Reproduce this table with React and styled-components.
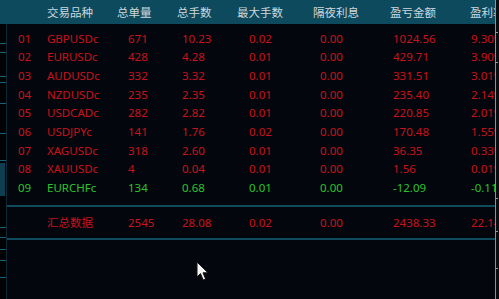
import styled, { createGlobalStyle } from 'styled-components';

const GlobalStyle = createGlobalStyle`
  html, body {
    margin: 0;
    padding: 0;
    background: #03070d;
  }
  body {
    font-family: "Noto Sans", "Noto Sans CJK SC", sans-serif;
    font-size: 11.5px;
  }
`;

const RED = '#c8121d';
const GREEN = '#2cc22c';

const rows = [
    { no: '01', sym: 'GBPUSDc', qty: '671', lots: '10.23', max: '0.02', swap: '0.00', pnl: '1024.56', rate: '9.30%', up: false },
    { no: '02', sym: 'EURUSDc', qty: '428', lots: '4.28', max: '0.01', swap: '0.00', pnl: '429.71', rate: '3.90%', up: false },
    { no: '03', sym: 'AUDUSDc', qty: '332', lots: '3.32', max: '0.01', swap: '0.00', pnl: '331.51', rate: '3.01%', up: false },
    { no: '04', sym: 'NZDUSDc', qty: '235', lots: '2.35', max: '0.01', swap: '0.00', pnl: '235.40', rate: '2.14%', up: false },
    { no: '05', sym: 'USDCADc', qty: '282', lots: '2.82', max: '0.01', swap: '0.00', pnl: '220.85', rate: '2.01%', up: false },
    { no: '06', sym: 'USDJPYc', qty: '141', lots: '1.76', max: '0.02', swap: '0.00', pnl: '170.48', rate: '1.55%', up: false },
    { no: '07', sym: 'XAGUSDc', qty: '318', lots: '2.60', max: '0.01', swap: '0.00', pnl: '36.35', rate: '0.33%', up: false },
    { no: '08', sym: 'XAUUSDc', qty: '4', lots: '0.04', max: '0.01', swap: '0.00', pnl: '1.56', rate: '0.01%', up: false },
    { no: '09', sym: 'EURCHFc', qty: '134', lots: '0.68', max: '0.01', swap: '0.00', pnl: '-12.09', rate: '-0.11%', up: true },
];

const headers = ['', '交易品种', '总单量', '总手数', '最大手数', '隔夜利息', '盈亏金额', '盈利率'];
// offset of the data text from the start of its column
const pads = [11, 0, 11, 5, 12, 7, 3, 1];

const App = () => {
    return (
        <Screen>
            <GlobalStyle />
            <Panel>
                <HeaderBar>
                    {headers.map((h, i) => (
                        <HeadCell key={i}>{h}</HeadCell>
                    ))}
                </HeaderBar>
                <Body>
                    <SideStrip>
                        <Mark $top={19} />
                        <Mark $top={28} />
                        <Mark $top={52} />
                        <Mark $top={58} />
                        <Mark $top={79} />
                        <Mark $top={109} />
                        <Mark $top={136} />
                        <SideBlock />
                        <Mark $top={203} />
                        <Mark $top={213} />
                        <Mark $top={225} />
                        <Mark $top={236} />
                        <Mark $top={253} />
                    </SideStrip>
                    <Table>
                        <Rows>
                            {rows.map((r) => {
                                const cells = [r.no, r.sym, r.qty, r.lots, r.max, r.swap, r.pnl, r.rate];
                                return (
                                    <Row key={r.no} $color={r.up ? GREEN : RED}>
                                        {cells.map((c, i) => (
                                            <Cell key={i} $pad={pads[i]}>{c}</Cell>
                                        ))}
                                    </Row>
                                );
                            })}
                        </Rows>
                        <Divider $gap={8} />
                        <TotalRow $color={RED}>
                            <Cell $pad={0}></Cell>
                            <Cell $pad={0}>汇总数据</Cell>
                            <Cell $pad={11}>2545</Cell>
                            <Cell $pad={5}>28.08</Cell>
                            <Cell $pad={12}>0.02</Cell>
                            <Cell $pad={7}>0.00</Cell>
                            <Cell $pad={3}>2438.33</Cell>
                            <Cell $pad={1}>22.14%</Cell>
                        </TotalRow>
                        <Divider $gap={0} />
                    </Table>
                </Body>
            </Panel>
            <EdgeRail>
                <Tick $top={32} />
                <Tick $top={62} />
                <Tick $top={198} />
                <Tick $top={231} />
                <Tick $top={268} />
            </EdgeRail>
            <Pointer width="14" height="21" viewBox="0 0 14 21">
                <path d="M1 1 L1 16 L4.5 12.6 L7.2 19 L9.6 18 L7 11.8 L12 11.8 Z" fill="#f4f4f4" stroke="#111" strokeWidth="1" strokeLinejoin="round" />
            </Pointer>
        </Screen>
    );
};

const Screen = styled.div`
    position: relative;
    width: 499px;
    height: 299px;
    display: flex;
    overflow: hidden;
    background: #03070d;
`;

const Panel = styled.div`
    width: 496px;
    display: flex;
    flex-direction: column;
    overflow: hidden;
`;

const columns = '40px 70px 60px 60px 76px 77px 80px 1fr';

const HeaderBar = styled.div`
    height: 24px;
    flex-shrink: 0;
    padding-left: 7px;
    display: grid;
    grid-template-columns: ${columns};
    align-items: center;
    background: #0d4a5e;
    color: #ccd9de;
    font-family: "Noto Sans CJK SC", sans-serif;
    font-size: 11.5px;
    padding-bottom: 1px;
    box-sizing: border-box;
`;

const HeadCell = styled.div`
    white-space: nowrap;
    overflow: visible;
`;

const Body = styled.div`
    flex: 1;
    display: flex;
`;

const SideStrip = styled.div`
    position: relative;
    width: 6px;
    flex-shrink: 0;
    background: #010204;
    border-right: 1px solid #0b2a36;
`;

const Mark = styled.div`
    position: absolute;
    left: 0;
    top: ${(p) => p.$top}px;
    width: 6px;
    height: 1px;
    background: #16617a;
`;

const SideBlock = styled.div`
    position: absolute;
    left: 0;
    top: 139px;
    width: 5px;
    height: 33px;
    background: #0e3e50;
`;

const Table = styled.div`
    flex: 1;
    padding-top: 5px;
    display: flex;
    flex-direction: column;
`;

const Rows = styled.div`
    display: flex;
    flex-direction: column;
`;

const Row = styled.div`
    height: 18.65px;
    display: grid;
    grid-template-columns: ${columns};
    align-items: center;
    color: ${(p) => p.$color};
    white-space: nowrap;
`;

const TotalRow = styled(Row)`
    height: 31px;
`;

const Cell = styled.div`
    padding-left: ${(p) => p.$pad}px;
    overflow: visible;
`;

const Divider = styled.div`
    height: 2px;
    flex-shrink: 0;
    background: #0f4b5d;
    margin-top: ${(p) => p.$gap}px;
`;

const EdgeRail = styled.div`
    position: relative;
    width: 3px;
    border-left: 1px solid #8e9296;
    background: #0a0c10;
`;

const Tick = styled.div`
    position: absolute;
    left: -1px;
    top: ${(p) => p.$top}px;
    width: 3px;
    height: 1px;
    background: #8e9296;
`;

const Pointer = styled.svg`
    position: absolute;
    left: 196px;
    top: 261px;
`;

export default App;
